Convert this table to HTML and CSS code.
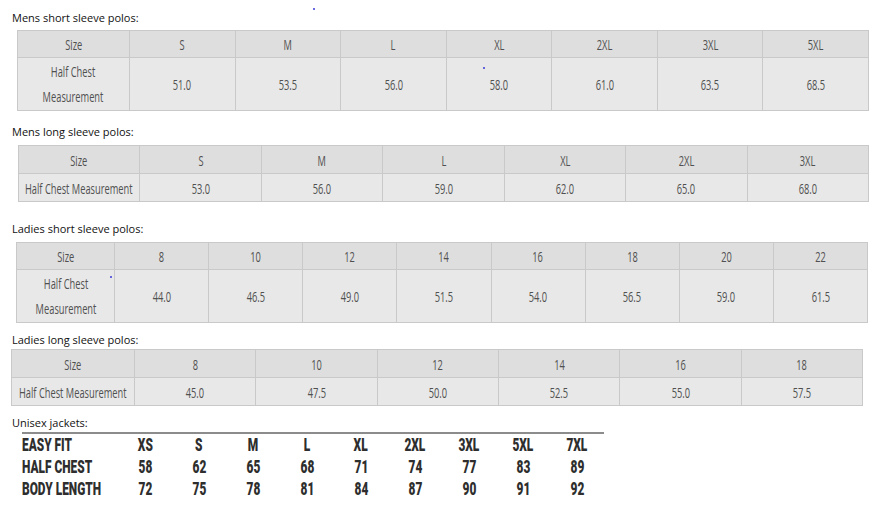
FILE: index.html
```html
<!DOCTYPE html>
<html>
<head>
<meta charset="utf-8">
<link rel="stylesheet" href="styles.css">
</head>
<body>
<div class="page">
  <span class="dot dot-a"></span>
  <span class="dot dot-b"></span>
  <span class="dot dot-c"></span>

  <section class="block block-1">
    <h2 class="title">Mens short sleeve polos:</h2>
    <table class="chart chart-1">
      <colgroup><col class="c1-first"><col><col><col><col><col><col><col></colgroup>
      <tr class="head tall-head">
        <td><div class="cell"><span class="t">Size</span></div></td>
        <td><div class="cell"><span class="t">S</span></div></td>
        <td><div class="cell"><span class="t">M</span></div></td>
        <td><div class="cell"><span class="t">L</span></div></td>
        <td><div class="cell"><span class="t">XL</span></div></td>
        <td><div class="cell"><span class="t">2XL</span></div></td>
        <td><div class="cell"><span class="t">3XL</span></div></td>
        <td><div class="cell"><span class="t">5XL</span></div></td>
      </tr>
      <tr class="body double">
        <td><div class="cell"><span class="t two">Half Chest<br>Measurement</span></div></td>
        <td><div class="cell"><span class="t">51.0</span></div></td>
        <td><div class="cell"><span class="t">53.5</span></div></td>
        <td><div class="cell"><span class="t">56.0</span></div></td>
        <td><div class="cell"><span class="t">58.0</span></div></td>
        <td><div class="cell"><span class="t">61.0</span></div></td>
        <td><div class="cell"><span class="t">63.5</span></div></td>
        <td><div class="cell"><span class="t">68.5</span></div></td>
      </tr>
    </table>
  </section>

  <section class="block block-2">
    <h2 class="title">Mens long sleeve polos:</h2>
    <table class="chart chart-2">
      <colgroup><col><col><col><col><col><col><col></colgroup>
      <tr class="head">
        <td><div class="cell"><span class="t">Size</span></div></td>
        <td><div class="cell"><span class="t">S</span></div></td>
        <td><div class="cell"><span class="t">M</span></div></td>
        <td><div class="cell"><span class="t">L</span></div></td>
        <td><div class="cell"><span class="t">XL</span></div></td>
        <td><div class="cell"><span class="t">2XL</span></div></td>
        <td><div class="cell"><span class="t">3XL</span></div></td>
      </tr>
      <tr class="body single">
        <td><div class="cell"><span class="t">Half Chest Measurement</span></div></td>
        <td><div class="cell"><span class="t">53.0</span></div></td>
        <td><div class="cell"><span class="t">56.0</span></div></td>
        <td><div class="cell"><span class="t">59.0</span></div></td>
        <td><div class="cell"><span class="t">62.0</span></div></td>
        <td><div class="cell"><span class="t">65.0</span></div></td>
        <td><div class="cell"><span class="t">68.0</span></div></td>
      </tr>
    </table>
  </section>

  <section class="block block-3">
    <h2 class="title">Ladies short sleeve polos:</h2>
    <table class="chart chart-3">
      <colgroup><col class="c3-first"><col><col><col><col><col><col><col><col></colgroup>
      <tr class="head tall-head">
        <td><div class="cell"><span class="t">Size</span></div></td>
        <td><div class="cell"><span class="t">8</span></div></td>
        <td><div class="cell"><span class="t">10</span></div></td>
        <td><div class="cell"><span class="t">12</span></div></td>
        <td><div class="cell"><span class="t">14</span></div></td>
        <td><div class="cell"><span class="t">16</span></div></td>
        <td><div class="cell"><span class="t">18</span></div></td>
        <td><div class="cell"><span class="t">20</span></div></td>
        <td><div class="cell"><span class="t">22</span></div></td>
      </tr>
      <tr class="body double">
        <td><div class="cell"><span class="t two">Half Chest<br>Measurement</span></div></td>
        <td><div class="cell"><span class="t">44.0</span></div></td>
        <td><div class="cell"><span class="t">46.5</span></div></td>
        <td><div class="cell"><span class="t">49.0</span></div></td>
        <td><div class="cell"><span class="t">51.5</span></div></td>
        <td><div class="cell"><span class="t">54.0</span></div></td>
        <td><div class="cell"><span class="t">56.5</span></div></td>
        <td><div class="cell"><span class="t">59.0</span></div></td>
        <td><div class="cell"><span class="t">61.5</span></div></td>
      </tr>
    </table>
  </section>

  <section class="block block-4">
    <h2 class="title">Ladies long sleeve polos:</h2>
    <table class="chart chart-4">
      <colgroup><col class="c4-first"><col><col><col><col><col><col></colgroup>
      <tr class="head">
        <td><div class="cell"><span class="t">Size</span></div></td>
        <td><div class="cell"><span class="t">8</span></div></td>
        <td><div class="cell"><span class="t">10</span></div></td>
        <td><div class="cell"><span class="t">12</span></div></td>
        <td><div class="cell"><span class="t">14</span></div></td>
        <td><div class="cell"><span class="t">16</span></div></td>
        <td><div class="cell"><span class="t">18</span></div></td>
      </tr>
      <tr class="body single">
        <td><div class="cell"><span class="t">Half Chest Measurement</span></div></td>
        <td><div class="cell"><span class="t">45.0</span></div></td>
        <td><div class="cell"><span class="t">47.5</span></div></td>
        <td><div class="cell"><span class="t">50.0</span></div></td>
        <td><div class="cell"><span class="t">52.5</span></div></td>
        <td><div class="cell"><span class="t">55.0</span></div></td>
        <td><div class="cell"><span class="t">57.5</span></div></td>
      </tr>
    </table>
  </section>

  <section class="block block-5">
    <h2 class="title">Unisex jackets:</h2>
    <div class="jackets">
      <div class="jrow">
        <span class="jl"><b>EASY FIT</b></span>
        <span class="jc"><b>XS</b></span><span class="jc"><b>S</b></span><span class="jc"><b>M</b></span>
        <span class="jc"><b>L</b></span><span class="jc"><b>XL</b></span><span class="jc"><b>2XL</b></span>
        <span class="jc"><b>3XL</b></span><span class="jc"><b>5XL</b></span><span class="jc"><b>7XL</b></span>
      </div>
      <div class="jrow">
        <span class="jl"><b>HALF CHEST</b></span>
        <span class="jc"><b>58</b></span><span class="jc"><b>62</b></span><span class="jc"><b>65</b></span>
        <span class="jc"><b>68</b></span><span class="jc"><b>71</b></span><span class="jc"><b>74</b></span>
        <span class="jc"><b>77</b></span><span class="jc"><b>83</b></span><span class="jc"><b>89</b></span>
      </div>
      <div class="jrow">
        <span class="jl"><b>BODY LENGTH</b></span>
        <span class="jc"><b>72</b></span><span class="jc"><b>75</b></span><span class="jc"><b>78</b></span>
        <span class="jc"><b>81</b></span><span class="jc"><b>84</b></span><span class="jc"><b>87</b></span>
        <span class="jc"><b>90</b></span><span class="jc"><b>91</b></span><span class="jc"><b>92</b></span>
      </div>
    </div>
  </section>
</div>
</body>
</html>
```
FILE: styles.css
```css
* { box-sizing: border-box; }
html, body { margin: 0; padding: 0; background: #fff; }
.page { position: relative; width: 886px; height: 520px; overflow: hidden; }

.title {
  margin: 0;
  padding-left: 12px;
  font-family: "Open Sans", "Noto Sans", sans-serif;
  font-weight: normal;
  font-size: 11px;
  line-height: 16px;
  color: #111;
}

.block-1 { padding-top: 10px; }
.block-1 .chart { margin: 4px 0 0 17px; width: 852px; }
.block-2 { padding-top: 13px; }
.block-2 .chart { margin: 5px 0 0 18px; width: 851px; }
.block-3 { padding-top: 19px; }
.block-3 .chart { margin: 5px 0 0 16px; width: 852px; }
.block-4 { padding-top: 9px; }
.block-4 .chart { margin: 1px 0 0 11px; width: 852px; }
.block-5 { padding-top: 9px; }

.chart {
  border-collapse: collapse;
  table-layout: fixed;
  border: 1px solid #c9c9c9;
}
.c1-first { width: 112px; }
.c3-first { width: 98px; }
.c4-first { width: 123px; }

.chart td {
  border: 1px solid #c9c9c9;
  padding: 0;
  overflow: visible;
}
.chart .head td { background: #dedede; height: 28px; }
.chart .tall-head td { height: 27px; }
.chart .body td { background: #e8e8e8; }
.chart .single td { height: 28px; }
.chart .double td { height: 53px; }

.cell {
  display: flex;
  justify-content: center;
  align-items: center;
  height: 100%;
}
.t {
  flex-shrink: 0;
  display: inline-block;
  white-space: nowrap;
  text-align: center;
  font-family: "Open Sans", "Noto Sans", sans-serif;
  font-weight: 400;
  font-size: 15px;
  line-height: 18px;
  color: #505050;
  transform: scaleX(0.62);
}
.t.two { line-height: 25px; }

.jackets {
  margin: 1px 0 0 22px;
  width: 582px;
  border-top: 2px solid #8c8c8c;
}
.jrow {
  display: grid;
  grid-template-columns: 96px repeat(9, 54px);
  height: 22px;
  align-items: center;
}
.jl, .jc {
  display: flex;
  align-items: center;
  font-family: Roboto, "Liberation Sans", sans-serif;
  font-weight: 700;
  font-size: 18px;
  line-height: 22px;
  color: #2e2e2e;
}
.jl { justify-content: flex-start; }
.jc { justify-content: center; }
.jl b, .jc b {
  display: inline-block;
  white-space: nowrap;
  flex-shrink: 0;
  transform: scaleX(0.66);
}
.jl b { transform-origin: left center; }

.dot {
  position: absolute;
  width: 2px;
  height: 2px;
  background: #3a3ad8;
  border-radius: 1px;
}
.dot-a { left: 313px; top: 8px; }
.dot-b { left: 483px; top: 67px; }
.dot-c { left: 110px; top: 276px; }
```
